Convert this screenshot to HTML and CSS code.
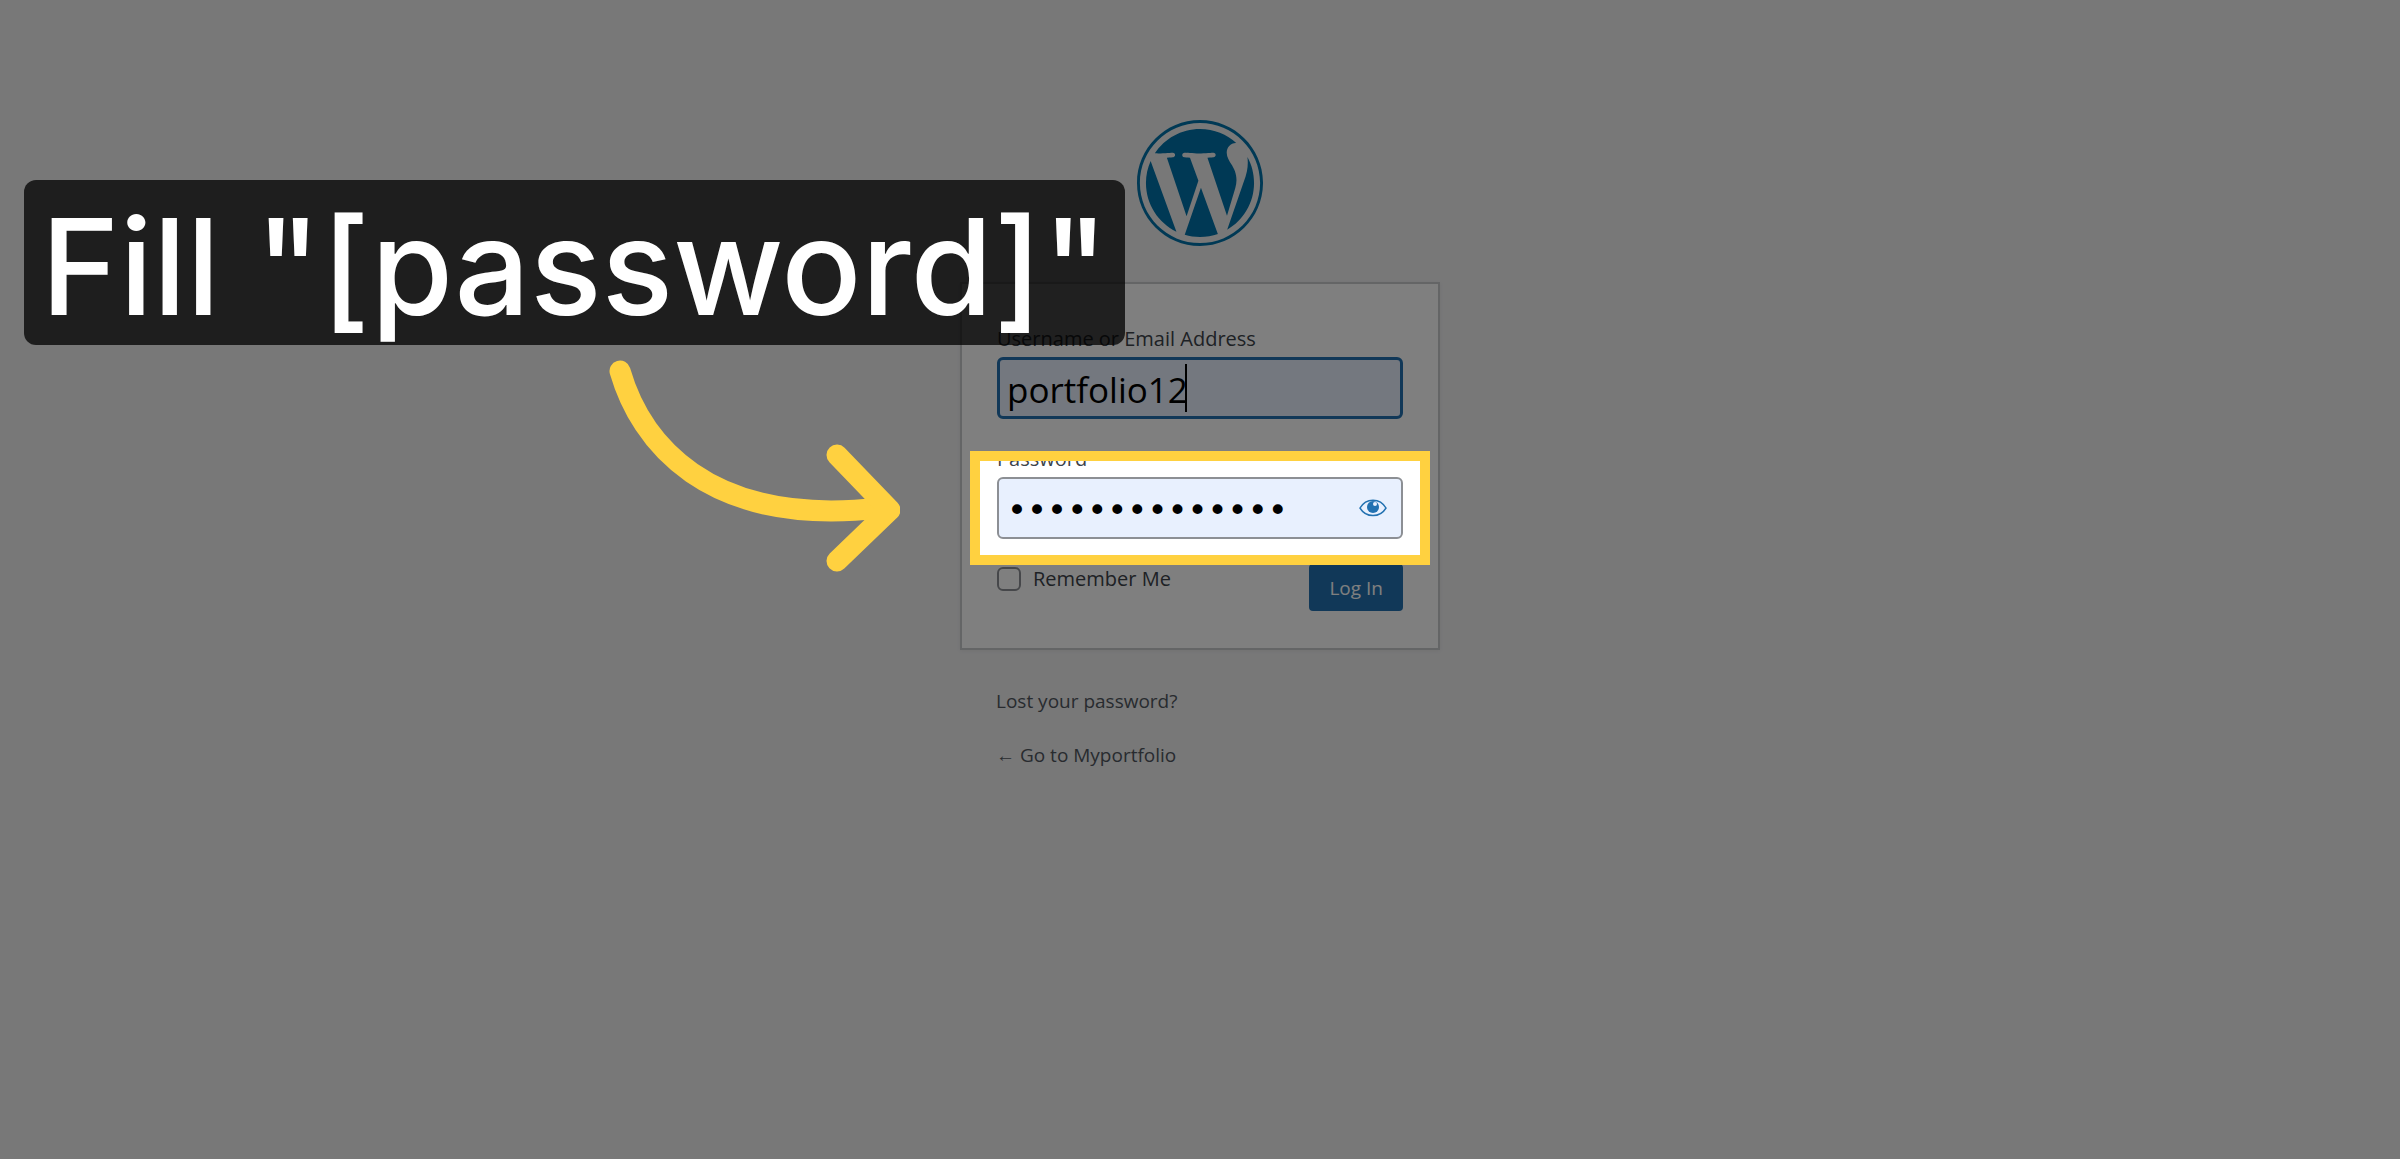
FILE: index.html
```html
<!DOCTYPE html>
<html lang="en">
<head>
    <meta charset="UTF-8">
    <meta name="viewport" content="width=device-width, initial-scale=1.0">
    <title>Log In</title>
    <link rel="stylesheet" href="styles.css">
</head>
<body>
    <main class="login">
        <h1 class="logo">
            <a href="#" aria-label="WordPress">
                <svg viewBox="0 0 122.52 122.523" fill="#0073aa" aria-hidden="true">
                    <path d="m8.708 61.26c0 20.802 12.089 38.779 29.619 47.298l-25.069-68.686c-2.916 6.536-4.55 13.769-4.55 21.388z"/>
                    <path d="m96.74 58.608c0-6.495-2.333-10.993-4.334-14.494-2.664-4.329-5.161-7.995-5.161-12.324 0-4.831 3.664-9.328 8.825-9.328.233 0 .454.029.681.042-9.35-8.566-21.807-13.796-35.489-13.796-18.36 0-34.513 9.42-43.91 23.688 1.233.037 2.395.063 3.382.063 5.497 0 14.006-.667 14.006-.667 2.833-.167 3.167 3.994.337 4.329 0 0-2.847.335-6.015.501l19.138 56.925 11.501-34.493-8.188-22.434c-2.83-.166-5.511-.501-5.511-.501-2.832-.166-2.5-4.496.332-4.329 0 0 8.679.667 13.843.667 5.496 0 14.006-.667 14.006-.667 2.835-.167 3.168 3.994.337 4.329 0 0-2.853.335-6.015.501l18.992 56.494 5.242-17.517c2.272-7.269 4.001-12.49 4.001-16.989z"/>
                    <path d="m62.184 65.857-15.768 45.819c4.708 1.384 9.687 2.141 14.846 2.141 6.12 0 11.989-1.058 17.452-2.979-.141-.225-.269-.464-.374-.724z"/>
                    <path d="m107.376 36.046c.226 1.674.354 3.471.354 5.404 0 5.333-.996 11.328-3.996 18.824l-16.053 46.413c15.624-9.111 26.133-26.038 26.133-45.426.001-9.137-2.333-17.729-6.438-25.215z"/>
                    <path d="m61.262 0c-33.779 0-61.262 27.481-61.262 61.26 0 33.783 27.483 61.263 61.262 61.263 33.778 0 61.265-27.48 61.265-61.263-.001-33.779-27.487-61.26-61.265-61.26zm0 119.715c-32.23 0-58.453-26.223-58.453-58.455 0-32.23 26.222-58.451 58.453-58.451 32.229 0 58.45 26.221 58.45 58.451 0 32.232-26.221 58.455-58.45 58.455z"/>
                </svg>
            </a>
        </h1>

        <form class="login-form">
            <div class="field">
                <label for="username">Username or Email Address</label>
                <div class="input-wrap">
                    <input class="input is-focused" type="text" id="username" value="portfolio12">
                    <span class="caret"></span>
                </div>
            </div>

            <div class="field">
                <label for="password">Password</label>
                <div class="input-wrap">
                    <input class="input input-password" type="password" id="password" value="abcdefghijklmn">
                    <button class="show-password" type="button" aria-label="Show password">
                        <svg viewBox="0 0 28 18" aria-hidden="true">
                            <path d="M1 9C7-1.500 21-1.500 27 9C21 19 7 19 1 9Z" fill="none" stroke="#2271b1" stroke-width="1.500"/>
                            <circle cx="14" cy="8" r="6" fill="#2271b1"/>
                            <circle cx="16" cy="5" r="2" fill="#e8f0fe"/>
                        </svg>
                    </button>

                    <!-- Dims everything around the password field -->
                    <div class="spotlight"></div>
                    <svg class="arrow" viewBox="0 0 300 230" aria-hidden="true">
                        <path d="M20 21C40 90 105 178 280 158"/>
                        <path d="M237 105L290 160L237 211"/>
                    </svg>
                </div>
            </div>

            <div class="actions">
                <label class="remember" for="remember">
                    <input type="checkbox" id="remember">
                    Remember Me
                </label>
                <button class="submit" type="submit">Log In</button>
            </div>
        </form>

        <nav class="links">
            <a href="#">Lost your password?</a>
            <a href="#">← Go to Myportfolio</a>
        </nav>
    </main>

    <div class="caption">Fill "[password]"</div>
</body>
</html>
```

FILE: styles.css
```css
* {
    margin: 0;
    padding: 0;
    box-sizing: border-box;
}

body {
    position: relative;
    min-height: 100vh;
    overflow: hidden;
    background: #f0f0f1;
    color: #3c434a;
    font-family: "Open Sans", "Noto Sans", sans-serif;
    font-size: 20px;
    line-height: 30px;
}

.login {
    width: 100%;
    max-width: 480px;
    margin: 0 auto;
    padding-top: 120px;
}

.logo {
    width: 126px;
    height: 126px;
    margin: 0 auto 36px;
}

.logo a,
.logo svg {
    display: block;
    width: 100%;
    height: 100%;
}

.login-form {
    padding: 40px 35px 37px;
    background: #fff;
    border: 2px solid #c9cacd;
    box-shadow: 0 1px 4px rgba(0, 0, 0, 0.06);
}

.field {
    display: flex;
    flex-direction: column;
    gap: 3px;
    margin-bottom: 25px;
}

.input-wrap {
    position: relative;
}

.input {
    display: block;
    width: 100%;
    height: 62px;
    padding: 2px 7px 0;
    background: #e8f0fe;
    border: 2px solid #8c8f94;
    border-radius: 6px;
    color: #000;
    font-family: inherit;
    font-size: 35px;
    outline: none;
}

.input.is-focused {
    border: 3px solid #2271b1;
}

.input-password {
    padding: 4px 60px 0 8px;
    font-family: "DejaVu Sans", sans-serif;
    font-size: 34px;
}

.caret {
    position: absolute;
    top: 7px;
    left: 188px;
    width: 2px;
    height: 48px;
    background: #000;
}

.show-password {
    position: absolute;
    top: 0;
    right: 0;
    width: 60px;
    height: 62px;
    display: flex;
    align-items: center;
    justify-content: center;
    background: none;
    border: none;
    cursor: pointer;
}

.show-password svg {
    width: 28px;
    height: 18px;
}

.actions {
    display: flex;
    justify-content: space-between;
    align-items: flex-start;
}

.remember {
    display: flex;
    align-items: center;
    gap: 12px;
}

.remember input {
    appearance: none;
    width: 24px;
    height: 24px;
    background: #fff;
    border: 2px solid #8c8f94;
    border-radius: 6px;
}

.submit {
    height: 47px;
    padding: 0 20px;
    background: #2271b1;
    border: none;
    border-radius: 4px;
    color: #fff;
    font-family: inherit;
    font-size: 19px;
    line-height: 46px;
    cursor: pointer;
}

.links {
    display: flex;
    flex-direction: column;
    align-items: flex-start;
    gap: 24px;
    margin-top: 36px;
    padding: 0 36px;
    font-size: 19px;
}

.links a {
    color: #50575e;
    text-decoration: none;
}

.spotlight {
    position: absolute;
    z-index: 1;
    inset: -26px -27px;
    border: 10px solid #ffd140;
    box-shadow: 0 0 0 3000px rgba(0, 0, 0, 0.5);
    pointer-events: none;
}

.arrow {
    position: absolute;
    z-index: 2;
    top: -127px;
    right: 503px;
    width: 300px;
    height: 230px;
    fill: none;
    stroke: #ffd140;
    stroke-width: 21px;
    stroke-linecap: round;
    stroke-linejoin: round;
    pointer-events: none;
}

.caption {
    position: absolute;
    z-index: 2;
    top: 180px;
    left: 24px;
    padding: 8px 17px 0;
    background: rgba(0, 0, 0, 0.75);
    border-radius: 12px;
    color: #fff;
    font-family: Inter, sans-serif;
    font-size: 133px;
    font-weight: 500;
    line-height: 157px;
    white-space: nowrap;
}
```
